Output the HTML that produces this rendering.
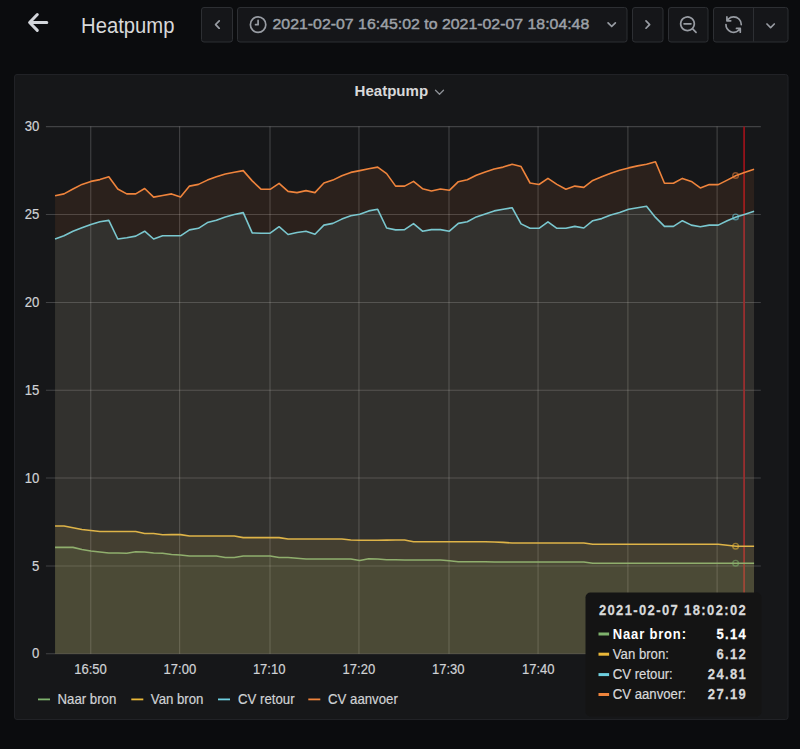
<!DOCTYPE html>
<html><head><meta charset="utf-8">
<style>
html,body{margin:0;padding:0;}
body{width:800px;height:749px;background:#0b0c0e;position:relative;overflow:hidden;font-family:"Liberation Sans",sans-serif;}
</style></head>
<body>
<svg width="800" height="749" style="position:absolute;left:0;top:0" font-family="Liberation Sans, sans-serif">
<path d="M46.8,22.45 L29.9,22.45 M37.3,14.5 L29.6,22.45 L37.3,30.4" fill="none" stroke="#d3d6db" stroke-width="3" stroke-linecap="round" stroke-linejoin="round"/>
<text transform="translate(81.10,32.80) scale(0.945,1)" font-size="21.412" fill="#d8d9da" font-weight="normal" text-anchor="start">Heatpump</text>
<rect x="201.5" y="7.5" width="31" height="34.5" rx="2.5" fill="#151619" stroke="#2d2f33" stroke-width="1"/>
<rect x="237.5" y="7.5" width="389.5" height="34.5" rx="2.5" fill="#151619" stroke="#2d2f33" stroke-width="1"/>
<rect x="632.5" y="7.5" width="30.5" height="34.5" rx="2.5" fill="#151619" stroke="#2d2f33" stroke-width="1"/>
<rect x="668.5" y="7.5" width="39.5" height="34.5" rx="2.5" fill="#151619" stroke="#2d2f33" stroke-width="1"/>
<rect x="713.5" y="7.5" width="74.5" height="34.5" rx="2.5" fill="#151619" stroke="#2d2f33" stroke-width="1"/>
<line x1="753.5" y1="8" x2="753.5" y2="41.5" stroke="#2d2f33" stroke-width="1"/>
<path transform="translate(207.14,14.34) scale(0.855)" d="M11.29,12l3.54-3.54a1,1,0,0,0,0-1.41,1,1,0,0,0-1.42,0L9.17,11.29a1,1,0,0,0,0,1.42L13.41,17a1,1,0,0,0,.71.29,1,1,0,0,0,.71-.29,1,1,0,0,0,0-1.41Z" fill="#989ca3"/>
<path transform="translate(247.84,14.39) scale(0.855)" d="M12,2A10,10,0,1,0,22,12,10.01114,10.01114,0,0,0,12,2Zm0,18a8,8,0,1,1,8-8A8.00917,8.00917,0,0,1,12,20Zm0-14a1,1,0,0,0-1,1v4H9a1,1,0,0,0,0,2h3a1,1,0,0,0,1-1V7A1,1,0,0,0,12,6Z" fill="#989ca3"/>
<path transform="translate(601.44,14.44) scale(0.855)" d="M17,9.17a1,1,0,0,0-1.41,0L12,12.71,8.46,9.170a1,1,0,0,0-1.41,0,1,1,0,0,0,0,1.42l4.24,4.24a1,1,0,0,0,1.42,0L17,10.59A1,1,0,0,0,17,9.17Z" fill="#989ca3"/>
<path transform="translate(637.54,14.34) scale(0.855)" d="M14.83,11.29,10.59,7.05a1,1,0,0,0-1.42,0,1,1,0,0,0,0,1.41L12.71,12,9.17,15.54a1,1,0,0,0,0,1.41,1,1,0,0,0,.71.29,1,1,0,0,0,.71-.29l4.24-4.24A1,1,0,0,0,14.83,11.29Z" fill="#989ca3"/>
<path transform="translate(678.10,14.40) scale(0.855)" d="M21.71,20.29,18,16.61A9,9,0,1,0,16.61,18l3.68,3.68a1,1,0,0,0,1.42,0A1,1,0,0,0,21.71,20.29ZM11,18a7,7,0,1,1,7-7A7,7,0,0,1,11,18Zm4-8H7a1,1,0,0,0,0,2h8a1,1,0,0,0,0-2Z" fill="#989ca3"/>
<path transform="translate(723.40,14.40) scale(0.85)" d="M19.91,15.51H15.38a1,1,0,0,0,0,2h2.4A8,8,0,0,1,4,12a1,1,0,0,0-2,0,10,10,0,0,0,16.88,7.23V21a1,1,0,0,0,2,0V16.5A1,1,0,0,0,19.91,15.51ZM12,2A10,10,0,0,0,5.12,4.77V3a1,1,0,0,0-2,0V7.5a1,1,0,0,0,1,1h4.5a1,1,0,0,0,0-2H6.22A8,8,0,0,1,20,12a1,1,0,0,0,2,0A10,10,0,0,0,12,2Z" fill="#989ca3"/>
<path transform="translate(760.34,15.54) scale(0.855)" d="M17,9.17a1,1,0,0,0-1.41,0L12,12.71,8.46,9.170a1,1,0,0,0-1.41,0,1,1,0,0,0,0,1.42l4.24,4.24a1,1,0,0,0,1.42,0L17,10.59A1,1,0,0,0,17,9.17Z" fill="#989ca3"/>
<text transform="translate(272.50,29.25) scale(1.045,1)" font-size="15.2" fill="#9da1a8" font-weight="normal" text-anchor="start" stroke="#9da1a8" stroke-width="0.45">2021-02-07 16:45:02 to 2021-02-07 18:04:48</text>
<rect x="14.5" y="74.5" width="773.5" height="645" rx="2.5" fill="#161719" stroke="#212226" stroke-width="1"/>
<text transform="translate(354.50,96.45) scale(1.04,1)" font-size="14.5" fill="#d8d9da" font-weight="bold" text-anchor="start">Heatpump</text>
<path d="M435.5,90.2 L439.5,94.2 L443.5,90.2" fill="none" stroke="#8e9196" stroke-width="1.3" stroke-linecap="round" stroke-linejoin="round"/>
<line x1="90.75" y1="126.6" x2="90.75" y2="653.8" stroke="#ffffff" stroke-opacity="0.19" stroke-width="1.1"/>
<line x1="179.60" y1="126.6" x2="179.60" y2="653.8" stroke="#ffffff" stroke-opacity="0.19" stroke-width="1.1"/>
<line x1="270.00" y1="126.6" x2="270.00" y2="653.8" stroke="#ffffff" stroke-opacity="0.19" stroke-width="1.1"/>
<line x1="358.95" y1="126.6" x2="358.95" y2="653.8" stroke="#ffffff" stroke-opacity="0.19" stroke-width="1.1"/>
<line x1="449.00" y1="126.6" x2="449.00" y2="653.8" stroke="#ffffff" stroke-opacity="0.19" stroke-width="1.1"/>
<line x1="538.05" y1="126.6" x2="538.05" y2="653.8" stroke="#ffffff" stroke-opacity="0.19" stroke-width="1.1"/>
<line x1="627.90" y1="126.6" x2="627.90" y2="653.8" stroke="#ffffff" stroke-opacity="0.19" stroke-width="1.1"/>
<line x1="717.10" y1="126.6" x2="717.10" y2="653.8" stroke="#ffffff" stroke-opacity="0.19" stroke-width="1.1"/>
<line x1="45.9" y1="126.60" x2="760.8" y2="126.60" stroke="#ffffff" stroke-opacity="0.19" stroke-width="1.1"/>
<line x1="45.9" y1="214.45" x2="760.8" y2="214.45" stroke="#ffffff" stroke-opacity="0.19" stroke-width="1.1"/>
<line x1="45.9" y1="302.45" x2="760.8" y2="302.45" stroke="#ffffff" stroke-opacity="0.19" stroke-width="1.1"/>
<line x1="45.9" y1="390.25" x2="760.8" y2="390.25" stroke="#ffffff" stroke-opacity="0.19" stroke-width="1.1"/>
<line x1="45.9" y1="478.00" x2="760.8" y2="478.00" stroke="#ffffff" stroke-opacity="0.19" stroke-width="1.1"/>
<line x1="45.9" y1="566.00" x2="760.8" y2="566.00" stroke="#ffffff" stroke-opacity="0.19" stroke-width="1.1"/>
<line x1="45.9" y1="653.80" x2="760.8" y2="653.80" stroke="#ffffff" stroke-opacity="0.19" stroke-width="1.1"/>
<line x1="744.1" y1="126.5" x2="744.1" y2="653.8" stroke="#94121a" stroke-width="1.8"/>
<path d="M55.05,547.40 L64.01,547.40 L72.97,547.40 L81.94,549.50 L90.90,551.00 L99.86,552.00 L108.82,553.00 L117.78,553.00 L126.75,553.30 L135.71,551.80 L144.67,552.00 L153.63,553.00 L162.59,553.30 L171.56,554.50 L180.52,555.00 L189.48,556.00 L198.44,556.00 L207.40,556.00 L216.37,556.00 L225.33,557.50 L234.29,557.50 L243.25,556.00 L252.21,556.00 L261.18,556.00 L270.14,556.00 L279.10,557.50 L288.06,557.50 L297.02,558.20 L305.99,559.00 L314.95,559.00 L323.91,559.00 L332.87,559.00 L341.83,559.00 L350.80,559.00 L359.76,560.50 L368.72,558.70 L377.68,559.00 L386.64,559.70 L395.61,559.70 L404.57,560.00 L413.53,560.00 L422.49,560.00 L431.45,560.00 L440.42,560.00 L449.38,560.80 L458.34,561.70 L467.30,561.70 L476.26,561.70 L485.23,561.70 L494.19,562.00 L503.15,562.00 L512.11,562.00 L521.07,562.00 L530.04,562.00 L539.00,562.00 L547.96,562.00 L556.92,562.00 L565.88,562.00 L574.85,562.00 L583.81,562.00 L592.77,563.20 L601.73,563.20 L610.69,563.20 L619.66,563.20 L628.62,563.20 L637.58,563.20 L646.54,563.20 L655.50,563.20 L664.47,563.20 L673.43,563.20 L682.39,563.20 L691.35,563.20 L700.31,563.20 L709.28,563.20 L718.24,563.20 L727.20,563.20 L736.16,563.20 L745.12,563.20 L754.09,563.20 L754.09,653.8 L55.05,653.8 Z" fill="#7eb26d" fill-opacity="0.1"/>
<path d="M55.05,547.40 L64.01,547.40 L72.97,547.40 L81.94,549.50 L90.90,551.00 L99.86,552.00 L108.82,553.00 L117.78,553.00 L126.75,553.30 L135.71,551.80 L144.67,552.00 L153.63,553.00 L162.59,553.30 L171.56,554.50 L180.52,555.00 L189.48,556.00 L198.44,556.00 L207.40,556.00 L216.37,556.00 L225.33,557.50 L234.29,557.50 L243.25,556.00 L252.21,556.00 L261.18,556.00 L270.14,556.00 L279.10,557.50 L288.06,557.50 L297.02,558.20 L305.99,559.00 L314.95,559.00 L323.91,559.00 L332.87,559.00 L341.83,559.00 L350.80,559.00 L359.76,560.50 L368.72,558.70 L377.68,559.00 L386.64,559.70 L395.61,559.70 L404.57,560.00 L413.53,560.00 L422.49,560.00 L431.45,560.00 L440.42,560.00 L449.38,560.80 L458.34,561.70 L467.30,561.70 L476.26,561.70 L485.23,561.70 L494.19,562.00 L503.15,562.00 L512.11,562.00 L521.07,562.00 L530.04,562.00 L539.00,562.00 L547.96,562.00 L556.92,562.00 L565.88,562.00 L574.85,562.00 L583.81,562.00 L592.77,563.20 L601.73,563.20 L610.69,563.20 L619.66,563.20 L628.62,563.20 L637.58,563.20 L646.54,563.20 L655.50,563.20 L664.47,563.20 L673.43,563.20 L682.39,563.20 L691.35,563.20 L700.31,563.20 L709.28,563.20 L718.24,563.20 L727.20,563.20 L736.16,563.20 L745.12,563.20 L754.09,563.20" fill="none" stroke="#7eb26d" stroke-width="1.6" stroke-linejoin="round"/>
<path d="M55.05,526.00 L64.01,526.00 L72.97,527.80 L81.94,529.50 L90.90,530.50 L99.86,531.50 L108.82,531.50 L117.78,531.50 L126.75,531.50 L135.71,531.50 L144.67,533.50 L153.63,533.50 L162.59,534.70 L171.56,534.60 L180.52,534.60 L189.48,536.00 L198.44,536.00 L207.40,536.00 L216.37,536.00 L225.33,536.00 L234.29,536.00 L243.25,537.60 L252.21,537.60 L261.18,537.60 L270.14,537.60 L279.10,537.60 L288.06,539.00 L297.02,539.00 L305.99,539.00 L314.95,539.00 L323.91,539.00 L332.87,539.00 L341.83,539.00 L350.80,540.00 L359.76,540.20 L368.72,540.20 L377.68,540.20 L386.64,540.10 L395.61,540.00 L404.57,540.00 L413.53,541.75 L422.49,541.75 L431.45,541.75 L440.42,541.75 L449.38,541.75 L458.34,541.75 L467.30,541.75 L476.26,541.75 L485.23,541.75 L494.19,542.00 L503.15,542.40 L512.11,543.00 L521.07,543.00 L530.04,543.00 L539.00,543.00 L547.96,543.00 L556.92,543.00 L565.88,543.00 L574.85,543.00 L583.81,543.00 L592.77,544.30 L601.73,544.30 L610.69,544.30 L619.66,544.30 L628.62,544.30 L637.58,544.30 L646.54,544.30 L655.50,544.30 L664.47,544.30 L673.43,544.30 L682.39,544.30 L691.35,544.30 L700.31,544.30 L709.28,544.30 L718.24,544.30 L727.20,545.20 L736.16,546.20 L745.12,546.20 L754.09,546.20 L754.09,653.8 L55.05,653.8 Z" fill="#eab839" fill-opacity="0.1"/>
<path d="M55.05,526.00 L64.01,526.00 L72.97,527.80 L81.94,529.50 L90.90,530.50 L99.86,531.50 L108.82,531.50 L117.78,531.50 L126.75,531.50 L135.71,531.50 L144.67,533.50 L153.63,533.50 L162.59,534.70 L171.56,534.60 L180.52,534.60 L189.48,536.00 L198.44,536.00 L207.40,536.00 L216.37,536.00 L225.33,536.00 L234.29,536.00 L243.25,537.60 L252.21,537.60 L261.18,537.60 L270.14,537.60 L279.10,537.60 L288.06,539.00 L297.02,539.00 L305.99,539.00 L314.95,539.00 L323.91,539.00 L332.87,539.00 L341.83,539.00 L350.80,540.00 L359.76,540.20 L368.72,540.20 L377.68,540.20 L386.64,540.10 L395.61,540.00 L404.57,540.00 L413.53,541.75 L422.49,541.75 L431.45,541.75 L440.42,541.75 L449.38,541.75 L458.34,541.75 L467.30,541.75 L476.26,541.75 L485.23,541.75 L494.19,542.00 L503.15,542.40 L512.11,543.00 L521.07,543.00 L530.04,543.00 L539.00,543.00 L547.96,543.00 L556.92,543.00 L565.88,543.00 L574.85,543.00 L583.81,543.00 L592.77,544.30 L601.73,544.30 L610.69,544.30 L619.66,544.30 L628.62,544.30 L637.58,544.30 L646.54,544.30 L655.50,544.30 L664.47,544.30 L673.43,544.30 L682.39,544.30 L691.35,544.30 L700.31,544.30 L709.28,544.30 L718.24,544.30 L727.20,545.20 L736.16,546.20 L745.12,546.20 L754.09,546.20" fill="none" stroke="#eab839" stroke-width="1.6" stroke-linejoin="round"/>
<path d="M55.05,239.00 L64.01,235.80 L72.97,231.20 L81.94,227.70 L90.90,224.40 L99.86,221.80 L108.82,220.40 L117.78,239.00 L126.75,237.70 L135.71,236.10 L144.67,231.20 L153.63,239.00 L162.59,235.80 L171.56,235.80 L180.52,235.80 L189.48,229.90 L198.44,228.30 L207.40,222.60 L216.37,220.20 L225.33,216.90 L234.29,214.50 L243.25,212.60 L252.21,232.90 L261.18,233.20 L270.14,233.20 L279.10,226.70 L288.06,234.50 L297.02,232.50 L305.99,231.20 L314.95,234.20 L323.91,225.10 L332.87,223.40 L341.83,219.10 L350.80,215.80 L359.76,214.20 L368.72,210.90 L377.68,209.30 L386.64,228.00 L395.61,229.90 L404.57,229.60 L413.53,223.60 L422.49,231.20 L431.45,229.60 L440.42,229.60 L449.38,231.20 L458.34,223.40 L467.30,221.80 L476.26,216.90 L485.23,213.90 L494.19,210.90 L503.15,209.30 L512.11,207.70 L521.07,223.90 L530.04,228.30 L539.00,228.30 L547.96,221.80 L556.92,228.30 L565.88,228.30 L574.85,226.40 L583.81,228.00 L592.77,220.70 L601.73,218.60 L610.69,215.00 L619.66,212.60 L628.62,209.30 L637.58,207.70 L646.54,206.30 L655.50,217.40 L664.47,226.40 L673.43,226.40 L682.39,220.70 L691.35,225.10 L700.31,226.70 L709.28,225.10 L718.24,225.10 L727.20,220.70 L736.16,216.90 L745.12,214.20 L754.09,211.30 L754.09,653.8 L55.05,653.8 Z" fill="#6ed0e0" fill-opacity="0.1"/>
<path d="M55.05,239.00 L64.01,235.80 L72.97,231.20 L81.94,227.70 L90.90,224.40 L99.86,221.80 L108.82,220.40 L117.78,239.00 L126.75,237.70 L135.71,236.10 L144.67,231.20 L153.63,239.00 L162.59,235.80 L171.56,235.80 L180.52,235.80 L189.48,229.90 L198.44,228.30 L207.40,222.60 L216.37,220.20 L225.33,216.90 L234.29,214.50 L243.25,212.60 L252.21,232.90 L261.18,233.20 L270.14,233.20 L279.10,226.70 L288.06,234.50 L297.02,232.50 L305.99,231.20 L314.95,234.20 L323.91,225.10 L332.87,223.40 L341.83,219.10 L350.80,215.80 L359.76,214.20 L368.72,210.90 L377.68,209.30 L386.64,228.00 L395.61,229.90 L404.57,229.60 L413.53,223.60 L422.49,231.20 L431.45,229.60 L440.42,229.60 L449.38,231.20 L458.34,223.40 L467.30,221.80 L476.26,216.90 L485.23,213.90 L494.19,210.90 L503.15,209.30 L512.11,207.70 L521.07,223.90 L530.04,228.30 L539.00,228.30 L547.96,221.80 L556.92,228.30 L565.88,228.30 L574.85,226.40 L583.81,228.00 L592.77,220.70 L601.73,218.60 L610.69,215.00 L619.66,212.60 L628.62,209.30 L637.58,207.70 L646.54,206.30 L655.50,217.40 L664.47,226.40 L673.43,226.40 L682.39,220.70 L691.35,225.10 L700.31,226.70 L709.28,225.10 L718.24,225.10 L727.20,220.70 L736.16,216.90 L745.12,214.20 L754.09,211.30" fill="none" stroke="#6ed0e0" stroke-width="1.6" stroke-linejoin="round"/>
<path d="M55.05,195.80 L64.01,193.90 L72.97,189.00 L81.94,184.40 L90.90,181.40 L99.86,179.60 L108.82,176.80 L117.78,189.00 L126.75,193.90 L135.71,193.90 L144.67,188.50 L153.63,197.10 L162.59,195.50 L171.56,193.90 L180.52,197.10 L189.48,186.10 L198.44,184.40 L207.40,180.10 L216.37,176.80 L225.33,174.00 L234.29,172.30 L243.25,170.60 L252.21,180.90 L261.18,189.30 L270.14,189.30 L279.10,183.30 L288.06,191.40 L297.02,192.60 L305.99,190.60 L314.95,192.60 L323.91,183.00 L332.87,180.10 L341.83,175.70 L350.80,172.40 L359.76,170.60 L368.72,168.70 L377.68,167.10 L386.64,173.60 L395.61,186.10 L404.57,186.10 L413.53,181.40 L422.49,188.70 L431.45,191.00 L440.42,189.00 L449.38,190.30 L458.34,181.70 L467.30,179.70 L476.26,175.20 L485.23,171.90 L494.19,169.00 L503.15,167.10 L512.11,164.30 L521.07,166.60 L530.04,183.00 L539.00,184.50 L547.96,178.40 L556.92,184.40 L565.88,189.30 L574.85,186.10 L583.81,187.40 L592.77,180.40 L601.73,176.80 L610.69,173.20 L619.66,170.30 L628.62,167.90 L637.58,165.90 L646.54,164.30 L655.50,161.80 L664.47,183.30 L673.43,183.30 L682.39,178.40 L691.35,181.40 L700.31,187.90 L709.28,184.60 L718.24,184.60 L727.20,180.10 L736.16,175.50 L745.12,172.30 L754.09,169.20 L754.09,653.8 L55.05,653.8 Z" fill="#ef843c" fill-opacity="0.1"/>
<path d="M55.05,195.80 L64.01,193.90 L72.97,189.00 L81.94,184.40 L90.90,181.40 L99.86,179.60 L108.82,176.80 L117.78,189.00 L126.75,193.90 L135.71,193.90 L144.67,188.50 L153.63,197.10 L162.59,195.50 L171.56,193.90 L180.52,197.10 L189.48,186.10 L198.44,184.40 L207.40,180.10 L216.37,176.80 L225.33,174.00 L234.29,172.30 L243.25,170.60 L252.21,180.90 L261.18,189.30 L270.14,189.30 L279.10,183.30 L288.06,191.40 L297.02,192.60 L305.99,190.60 L314.95,192.60 L323.91,183.00 L332.87,180.10 L341.83,175.70 L350.80,172.40 L359.76,170.60 L368.72,168.70 L377.68,167.10 L386.64,173.60 L395.61,186.10 L404.57,186.10 L413.53,181.40 L422.49,188.70 L431.45,191.00 L440.42,189.00 L449.38,190.30 L458.34,181.70 L467.30,179.70 L476.26,175.20 L485.23,171.90 L494.19,169.00 L503.15,167.10 L512.11,164.30 L521.07,166.60 L530.04,183.00 L539.00,184.50 L547.96,178.40 L556.92,184.40 L565.88,189.30 L574.85,186.10 L583.81,187.40 L592.77,180.40 L601.73,176.80 L610.69,173.20 L619.66,170.30 L628.62,167.90 L637.58,165.90 L646.54,164.30 L655.50,161.80 L664.47,183.30 L673.43,183.30 L682.39,178.40 L691.35,181.40 L700.31,187.90 L709.28,184.60 L718.24,184.60 L727.20,180.10 L736.16,175.50 L745.12,172.30 L754.09,169.20" fill="none" stroke="#ef843c" stroke-width="1.6" stroke-linejoin="round"/>
<circle cx="735.6" cy="563.2" r="2.8" fill="none" stroke="#7eb26d" stroke-opacity="0.55" stroke-width="1.4"/>
<circle cx="735.6" cy="546.2" r="2.8" fill="none" stroke="#eab839" stroke-opacity="0.55" stroke-width="1.4"/>
<circle cx="735.6" cy="216.9" r="2.8" fill="none" stroke="#6ed0e0" stroke-opacity="0.55" stroke-width="1.4"/>
<circle cx="735.6" cy="175.5" r="2.8" fill="none" stroke="#ef843c" stroke-opacity="0.55" stroke-width="1.4"/>
<text transform="translate(39.40,131.10) scale(0.945,1)" font-size="13.886000000000001" fill="#d0d2d5" font-weight="normal" text-anchor="end" stroke="#d0d2d5" stroke-width="0.2">30</text>
<text transform="translate(39.40,218.95) scale(0.945,1)" font-size="13.886000000000001" fill="#d0d2d5" font-weight="normal" text-anchor="end" stroke="#d0d2d5" stroke-width="0.2">25</text>
<text transform="translate(39.40,306.95) scale(0.945,1)" font-size="13.886000000000001" fill="#d0d2d5" font-weight="normal" text-anchor="end" stroke="#d0d2d5" stroke-width="0.2">20</text>
<text transform="translate(39.40,394.75) scale(0.945,1)" font-size="13.886000000000001" fill="#d0d2d5" font-weight="normal" text-anchor="end" stroke="#d0d2d5" stroke-width="0.2">15</text>
<text transform="translate(39.40,482.50) scale(0.945,1)" font-size="13.886000000000001" fill="#d0d2d5" font-weight="normal" text-anchor="end" stroke="#d0d2d5" stroke-width="0.2">10</text>
<text transform="translate(39.40,570.50) scale(0.945,1)" font-size="13.886000000000001" fill="#d0d2d5" font-weight="normal" text-anchor="end" stroke="#d0d2d5" stroke-width="0.2">5</text>
<text transform="translate(39.40,658.30) scale(0.945,1)" font-size="13.886000000000001" fill="#d0d2d5" font-weight="normal" text-anchor="end" stroke="#d0d2d5" stroke-width="0.2">0</text>
<text transform="translate(90.55,673.80) scale(0.945,1)" font-size="13.780000000000001" fill="#d0d2d5" font-weight="normal" text-anchor="middle" stroke="#d0d2d5" stroke-width="0.2">16:50</text>
<text transform="translate(179.85,673.80) scale(0.945,1)" font-size="13.780000000000001" fill="#d0d2d5" font-weight="normal" text-anchor="middle" stroke="#d0d2d5" stroke-width="0.2">17:00</text>
<text transform="translate(269.15,673.80) scale(0.945,1)" font-size="13.780000000000001" fill="#d0d2d5" font-weight="normal" text-anchor="middle" stroke="#d0d2d5" stroke-width="0.2">17:10</text>
<text transform="translate(358.85,673.80) scale(0.945,1)" font-size="13.780000000000001" fill="#d0d2d5" font-weight="normal" text-anchor="middle" stroke="#d0d2d5" stroke-width="0.2">17:20</text>
<text transform="translate(448.25,673.80) scale(0.945,1)" font-size="13.780000000000001" fill="#d0d2d5" font-weight="normal" text-anchor="middle" stroke="#d0d2d5" stroke-width="0.2">17:30</text>
<text transform="translate(538.30,673.80) scale(0.945,1)" font-size="13.780000000000001" fill="#d0d2d5" font-weight="normal" text-anchor="middle" stroke="#d0d2d5" stroke-width="0.2">17:40</text>
<text transform="translate(627.65,673.80) scale(0.945,1)" font-size="13.780000000000001" fill="#d0d2d5" font-weight="normal" text-anchor="middle" stroke="#d0d2d5" stroke-width="0.2">17:50</text>
<text transform="translate(716.85,673.80) scale(0.945,1)" font-size="13.780000000000001" fill="#d0d2d5" font-weight="normal" text-anchor="middle" stroke="#d0d2d5" stroke-width="0.2">18:00</text>
<rect x="38" y="698.5" width="12" height="1.8" fill="#7eb26d"/>
<text transform="translate(57.50,703.70) scale(0.945,1)" font-size="13.991999999999999" fill="#d0d2d5" font-weight="normal" text-anchor="start" stroke="#d0d2d5" stroke-width="0.2">Naar bron</text>
<rect x="131.3" y="698.5" width="12" height="1.8" fill="#eab839"/>
<text transform="translate(150.80,703.70) scale(0.945,1)" font-size="13.991999999999999" fill="#d0d2d5" font-weight="normal" text-anchor="start" stroke="#d0d2d5" stroke-width="0.2">Van bron</text>
<rect x="218" y="698.5" width="12" height="1.8" fill="#6ed0e0"/>
<text transform="translate(238.00,703.70) scale(0.945,1)" font-size="13.991999999999999" fill="#d0d2d5" font-weight="normal" text-anchor="start" stroke="#d0d2d5" stroke-width="0.2">CV retour</text>
<rect x="308.3" y="698.5" width="12" height="1.8" fill="#ef843c"/>
<text transform="translate(328.00,703.70) scale(0.945,1)" font-size="13.991999999999999" fill="#d0d2d5" font-weight="normal" text-anchor="start" stroke="#d0d2d5" stroke-width="0.2">CV aanvoer</text>
<rect x="585.5" y="592.5" width="176" height="124" rx="5" fill="#141414"/>
<text transform="translate(598.90,614.80) scale(0.945,1)" font-size="13.780000000000001" fill="#d8d9da" font-weight="bold" text-anchor="start" letter-spacing="1.45" stroke="#d8d9da" stroke-width="0.25">2021-02-07 18:02:02</text>
<rect x="598.5" y="632.50" width="10.6" height="3" fill="#7eb26d"/>
<text transform="translate(612.80,638.60) scale(0.945,1)" font-size="13.780000000000001" fill="#ffffff" font-weight="bold" text-anchor="start" letter-spacing="0.87">Naar bron:</text>
<text transform="translate(747.00,638.60) scale(0.945,1)" font-size="13.780000000000001" fill="#ffffff" font-weight="bold" text-anchor="end" letter-spacing="1.4" stroke="#ffffff" stroke-width="0.25">5.14</text>
<rect x="598.5" y="652.70" width="10.6" height="3" fill="#eab839"/>
<text transform="translate(612.80,658.80) scale(0.955,1)" font-size="13.780000000000001" fill="#d8d9da" font-weight="normal" text-anchor="start" stroke="#d8d9da" stroke-width="0.2">Van bron:</text>
<text transform="translate(747.00,658.80) scale(0.945,1)" font-size="13.780000000000001" fill="#d8d9da" font-weight="bold" text-anchor="end" letter-spacing="1.4" stroke="#d8d9da" stroke-width="0.25">6.12</text>
<rect x="598.5" y="673.10" width="10.6" height="3" fill="#6ed0e0"/>
<text transform="translate(612.80,679.20) scale(0.955,1)" font-size="13.780000000000001" fill="#d8d9da" font-weight="normal" text-anchor="start" stroke="#d8d9da" stroke-width="0.2">CV retour:</text>
<text transform="translate(747.00,679.20) scale(0.945,1)" font-size="13.780000000000001" fill="#d8d9da" font-weight="bold" text-anchor="end" letter-spacing="1.4" stroke="#d8d9da" stroke-width="0.25">24.81</text>
<rect x="598.5" y="693.00" width="10.6" height="3" fill="#ef843c"/>
<text transform="translate(612.80,699.10) scale(0.955,1)" font-size="13.780000000000001" fill="#d8d9da" font-weight="normal" text-anchor="start" stroke="#d8d9da" stroke-width="0.2">CV aanvoer:</text>
<text transform="translate(747.00,699.10) scale(0.945,1)" font-size="13.780000000000001" fill="#d8d9da" font-weight="bold" text-anchor="end" letter-spacing="1.4" stroke="#d8d9da" stroke-width="0.25">27.19</text>
</svg>
</body></html>
